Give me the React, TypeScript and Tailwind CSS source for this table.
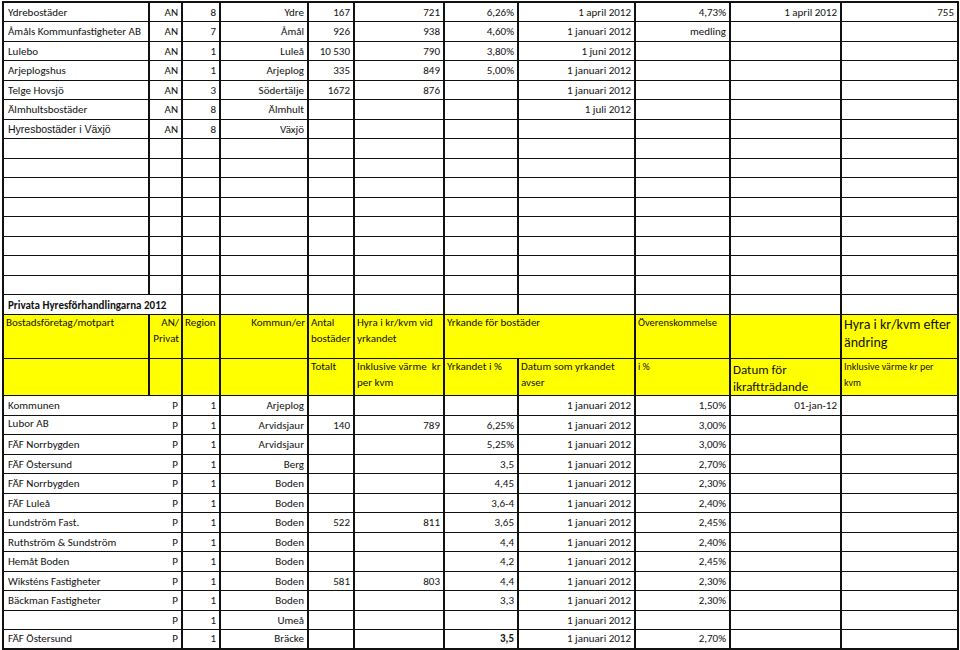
import React from "react";

type Row = string[];

const upper: Row[] = [
  ["Ydrebostäder", "AN", "8", "Ydre", "167", "721", "6,26%", "1 april 2012", "4,73%", "1 april 2012", "755"],
  ["Åmåls Kommunfastigheter AB", "AN", "7", "Åmål", "926", "938", "4,60%", "1 januari 2012", "medling", "", ""],
  ["Lulebo", "AN", "1", "Luleå", "10 530", "790", "3,80%", "1 juni 2012", "", "", ""],
  ["Arjeplogshus", "AN", "1", "Arjeplog", "335", "849", "5,00%", "1 januari 2012", "", "", ""],
  ["Telge Hovsjö", "AN", "3", "Södertälje", "1672", "876", "", "1 januari 2012", "", "", ""],
  ["Älmhultsbostäder", "AN", "8", "Älmhult", "", "", "", "1 juli 2012", "", "", ""],
  ["Hyresbostäder i Växjö", "AN", "8", "Växjö", "", "", "", "", "", "", ""],
];

const lower: Row[] = [
  ["Kommunen", "P", "1", "Arjeplog", "", "", "", "1 januari 2012", "1,50%", "01-jan-12", ""],
  ["Lubor AB", "P", "1", "Arvidsjaur", "140", "789", "6,25%", "1 januari 2012", "3,00%", "", ""],
  ["FÄF Norrbygden", "P", "1", "Arvidsjaur", "", "", "5,25%", "1 januari 2012", "3,00%", "", ""],
  ["FÄF Östersund", "P", "1", "Berg", "", "", "3,5", "1 januari 2012", "2,70%", "", ""],
  ["FÄF Norrbygden", "P", "1", "Boden", "", "", "4,45", "1 januari 2012", "2,30%", "", ""],
  ["FÄF Luleå", "P", "1", "Boden", "", "", "3,6-4", "1 januari 2012", "2,40%", "", ""],
  ["Lundström Fast.", "P", "1", "Boden", "522", "811", "3,65", "1 januari 2012", "2,45%", "", ""],
  ["Ruthström & Sundström", "P", "1", "Boden", "", "", "4,4", "1 januari 2012", "2,40%", "", ""],
  ["Hemåt Boden", "P", "1", "Boden", "", "", "4,2", "1 januari 2012", "2,45%", "", ""],
  ["Wiksténs Fastigheter", "P", "1", "Boden", "581", "803", "4,4", "1 januari 2012", "2,30%", "", ""],
  ["Bäckman Fastigheter", "P", "1", "Boden", "", "", "3,3", "1 januari 2012", "2,30%", "", ""],
  ["", "P", "1", "Umeå", "", "", "", "1 januari 2012", "", "", ""],
  ["FÄF Östersund", "P", "1", "Bräcke", "", "", "3,5", "1 januari 2012", "2,70%", "", ""],
];

const widths = [146, 33, 38, 88, 46, 90, 74, 117, 95, 111, 117];

const cell = "border-x-2 border-y-[1.5px] border-[#111] px-[3px] align-bottom whitespace-nowrap overflow-hidden";
const head = "border-x-2 border-y-[1.5px] border-[#111] px-[2px] align-top bg-[#ffff00] leading-[16px]";

export default function App() {
  const blanks = Array.from({ length: 8 }, () => Array(11).fill(""));
  return (
    <div
      className="bg-white w-[960px] h-[650px] overflow-hidden pl-[2px] pt-[1px] text-[11px] text-[#111]"
      style={{ fontFamily: "Carlito, Lato, 'Open Sans', sans-serif" }}
    >
      <table className="table-fixed border-collapse w-[956px]">
        <colgroup>
          {widths.map((w, i) => (
            <col key={i} style={{ width: w }} />
          ))}
        </colgroup>
        <tbody>
          {[...upper, ...blanks].map((r, ri) => (
            <tr key={"u" + ri} className="h-[19.5px]">
              {r.map((v, ci) => (
                <td
                  key={ci}
                  className={`${cell} ${ri === 0 ? "border-t-2" : ""} ${ci === 0 ? "text-left px-[4px]" : "text-right"} ${ri === 6 && ci === 0 ? "text-[10.5px]" : ""}`}
                  style={ri === 6 && ci === 0 ? { fontFamily: "'Liberation Sans', Arial, sans-serif" } : undefined}
                >
                  {v}
                </td>
              ))}
            </tr>
          ))}
          <tr className="h-[20px]">
            <td colSpan={2} className={`${cell} font-bold text-left px-[4px] overflow-visible`}>
              Privata Hyresförhandlingarna 2012
            </td>
            {widths.slice(2).map((_, i) => (
              <td key={i} className={cell}></td>
            ))}
          </tr>
          <tr className="h-[44px]">
            <td className={`${head} text-left`}>Bostadsföretag/motpart</td>
            <td className={`${head} text-right`}>
              AN/
              <br />
              Privat
            </td>
            <td className={`${head} text-left`}>Region</td>
            <td className={`${head} text-right`}>Kommun/er</td>
            <td className={`${head} text-left`}>
              Antal
              <br />
              bostäder
            </td>
            <td className={`${head} text-left`}>
              Hyra i kr/kvm vid
              <br />
              yrkandet
            </td>
            <td colSpan={2} className={`${head} text-left`}>Yrkande för bostäder</td>
            <td className={`${head} text-left text-[10.5px]`}>Överenskommelse</td>
            <td className={head}></td>
            <td className={`${head} text-left text-[14px] leading-[18px] pt-[1px]`}>
              Hyra i kr/kvm efter
              <br />
              ändring
            </td>
          </tr>
          <tr className="h-[31px]">
            <td className={head}></td>
            <td className={head}></td>
            <td className={head}></td>
            <td className={head}></td>
            <td className={`${head} text-left`}>Totalt</td>
            <td className={`${head} text-left whitespace-pre`}>
              {"Inklusive värme  kr\nper kvm"}
            </td>
            <td className={`${head} text-left`}>Yrkandet i %</td>
            <td className={`${head} text-left`}>
              Datum som yrkandet
              <br />
              avser
            </td>
            <td className={`${head} text-left text-[10px]`}>i %</td>
            <td className={`${head} text-left text-[13px] leading-[17px] pt-[2px]`}>
              Datum för
              <br />
              ikraftträdande
            </td>
            <td className={`${head} text-left text-[10px] leading-[15px]`}>
              {"Inklusive värme  kr per"}
              <br />
              kvm
            </td>
          </tr>
          {lower.map((r, ri) => (
            <tr key={"l" + ri} className="h-[19.5px]">
              {r.map((v, ci) => (
                <td
                  key={ci}
                  className={`${cell} ${ci === 0 ? "text-left px-[4px] border-r-0" : "text-right"} ${ci === 1 ? "border-l-0" : ""} ${ri === 1 && ci === 0 ? "align-top" : ""} ${ri === lower.length - 1 ? "border-b-[3px]" : ""} ${ri === lower.length - 1 && ci === 6 ? "font-bold" : ""}`}
                >
                  {v}
                </td>
              ))}
            </tr>
          ))}
        </tbody>
      </table>
    </div>
  );
}
